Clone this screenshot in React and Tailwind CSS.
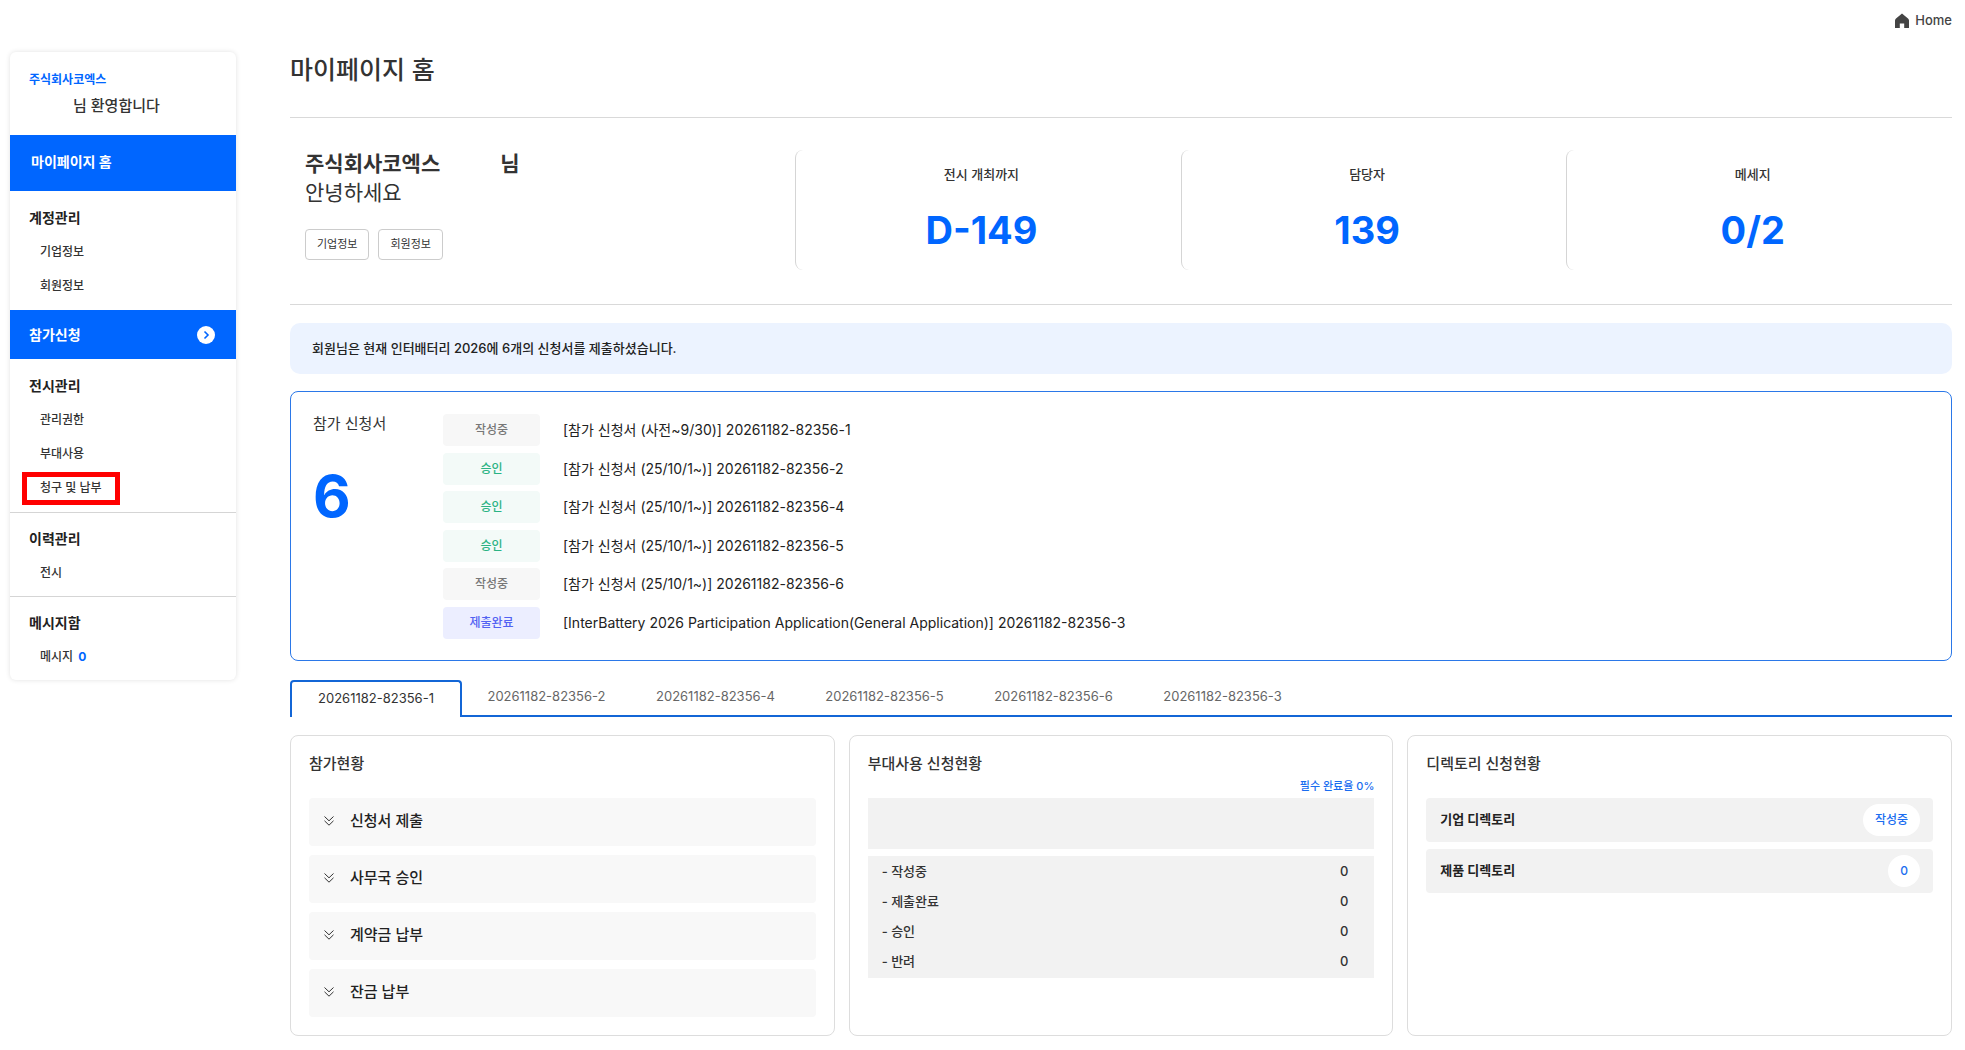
import React, { useState } from 'react';

const menu = [
  { title: '계정관리', items: ['기업정보', '회원정보'] },
  { title: '전시관리', items: ['관리권한', '부대사용', '청구 및 납부'] },
  { title: '이력관리', items: ['전시'] },
  { title: '메시지함', items: ['메시지'] },
];

const stats = [
  { label: '전시 개최까지', value: 'D-149' },
  { label: '담당자', value: '139' },
  { label: '메세지', value: '0/2' },
];

const applications = [
  { status: '작성중', name: '[참가 신청서 (사전~9/30)] 20261182-82356-1' },
  { status: '승인', name: '[참가 신청서 (25/10/1~)] 20261182-82356-2' },
  { status: '승인', name: '[참가 신청서 (25/10/1~)] 20261182-82356-4' },
  { status: '승인', name: '[참가 신청서 (25/10/1~)] 20261182-82356-5' },
  { status: '작성중', name: '[참가 신청서 (25/10/1~)] 20261182-82356-6' },
  { status: '제출완료', name: '[InterBattery 2026 Participation Application(General Application)] 20261182-82356-3' },
];

const statusStyle = {
  작성중: 'bg-[#f7f7f7] text-[#777777]',
  승인: 'bg-[#f3faf8] text-[#2bb384]',
  제출완료: 'bg-[#eceeff] text-[#5262f2]',
};

const tabs = [
  '20261182-82356-1',
  '20261182-82356-2',
  '20261182-82356-4',
  '20261182-82356-5',
  '20261182-82356-6',
  '20261182-82356-3',
];

const steps = ['신청서 제출', '사무국 승인', '계약금 납부', '잔금 납부'];

const usage = [
  { label: '작성중', count: 0 },
  { label: '제출완료', count: 0 },
  { label: '승인', count: 0 },
  { label: '반려', count: 0 },
];

const directories = [
  { label: '기업 디렉토리', value: '작성중' },
  { label: '제품 디렉토리', value: '0' },
];

const HomeIcon = () => (
  <svg width="14" height="16" viewBox="0 0 14 16" fill="#444444" aria-hidden="true">
    <path d="M7 0.5 L13 5.4 Q14 6.2 14 7.4 V15 H9.2 V10.4 H4.8 V15 H0 V7.4 Q0 6.2 1 5.4 Z" />
  </svg>
);

const CircleArrow = () => (
  <svg width="18" height="18" viewBox="0 0 18 18" fill="none" aria-hidden="true">
    <circle cx="9" cy="9" r="9" fill="#ffffff" />
    <path d="M7.5 5.5 L11 9 L7.5 12.5" stroke="#0066ff" strokeWidth="1.6" />
  </svg>
);

const DoubleChevron = () => (
  <svg width="10" height="10" viewBox="0 0 10 10" fill="none" stroke="#333333" aria-hidden="true">
    <path d="M0.5 0.5 L5 4.8 L9.5 0.5 M0.5 4.8 L5 9.2 L9.5 4.8" />
  </svg>
);

const MenuGroup = ({ title, items, divider }) => (
  <div className={divider ? 'border-t border-[#d5d5d5] pt-[15px] pb-[6px]' : 'pt-4 pb-[7px]'}>
    <h3 className="mb-[6px] pl-[19px] text-sm leading-[22px] font-bold text-[#222222]">{title}</h3>
    <ul>
      {items.map((item) => (
        <li key={item} className="flex h-[34px] items-center">
          <a
            href="#"
            className={
              item === '청구 및 납부'
                ? 'ml-3 flex h-[33px] items-center border-5 border-[#ff0000] px-[13px]'
                : 'ml-[30px] flex items-center'
            }
          >
            {item}
            {item === '메시지' && <span className="ml-[5px] font-bold text-[#0066ff]">0</span>}
          </a>
        </li>
      ))}
    </ul>
  </div>
);

const Card = ({ title, note, children }) => (
  <section className="rounded-lg border border-[#dddddd] px-[18px] pt-4 pb-[18px]">
    <div className="flex h-[46px] justify-between">
      <h3 className="text-[15px] leading-6 font-medium">{title}</h3>
      {note && <span className="self-end pb-1 text-[11px] leading-4 font-medium text-[#1a6df0]">{note}</span>}
    </div>
    {children}
  </section>
);

const App = () => {
  const [activeTab, setActiveTab] = useState(tabs[0]);

  return (
    <div className="min-h-screen bg-white pr-[13px] pl-[10px] font-['Inter','Noto_Sans_CJK_KR',sans-serif] text-[#333333]">
      <header className="flex h-[42px] items-center justify-end">
        <a href="#" className="flex items-center gap-[6px] text-[13px] font-medium text-[#444444]">
          <HomeIcon />
          Home
        </a>
      </header>

      <div className="flex items-start">
        <aside className="mt-[10px] w-[226px] shrink-0 overflow-hidden rounded-md text-xs font-medium shadow-[0_0_5px_rgba(0,0,0,0.12)]">
          <div className="h-[83px] pt-[18px] pl-[19px]">
            <p className="leading-5 font-bold text-[#0066ff]">주식회사코엑스</p>
            <p className="mt-1 pl-11 text-[15px] leading-6">님 환영합니다</p>
          </div>
          <a href="#" className="flex h-14 items-center bg-[#0066ff] pb-[2px] pl-[21px] text-sm font-bold text-white">
            마이페이지 홈
          </a>
          <MenuGroup {...menu[0]} />
          <a
            href="#"
            className="flex h-[49px] items-center justify-between bg-[#0066ff] pr-[21px] pl-[19px] text-sm font-bold text-white"
          >
            참가신청
            <CircleArrow />
          </a>
          <MenuGroup {...menu[1]} />
          <MenuGroup {...menu[2]} divider />
          <MenuGroup {...menu[3]} divider />
        </aside>

        <main className="ml-[54px] min-w-0 flex-1">
          <div className="h-[76px] border-b border-[#d9d9d9] pt-[10px]">
            <h1 className="text-[25px] leading-9 font-medium">마이페이지 홈</h1>
          </div>

          <section className="grid grid-cols-[1.31fr_1fr_1fr_1fr] border-b border-[#d9d9d9] pt-8 pb-[34px]">
            <div className="pl-[15px]">
              <p className="flex gap-[60px] text-[21px] leading-7 font-bold">
                <span>주식회사코엑스</span>
                <span>님</span>
              </p>
              <p className="text-[21px] leading-[30px]">안녕하세요</p>
              <div className="mt-[21px] flex gap-[9px]">
                <button type="button" className="h-[31px] rounded border border-[#cccccc] px-[11px] text-[11px]">
                  기업정보
                </button>
                <button type="button" className="h-[31px] rounded border border-[#cccccc] px-[11px] text-[11px]">
                  회원정보
                </button>
              </div>
            </div>
            {stats.map((stat) => (
              <div key={stat.label} className="mr-[14px] h-[120px] rounded-lg border-l border-[#d5d5d5] pt-3 text-center">
                <p className="text-[13px] leading-6 font-medium">{stat.label}</p>
                <p className="mt-5 text-[38px] leading-[48px] font-bold text-[#0066ff]">{stat.value}</p>
              </div>
            ))}
          </section>

          <p className="mt-[18px] rounded-[10px] bg-[#ecf3ff] px-[22px] text-[13px] leading-[51px] font-medium text-[#222222]">
            회원님은 현재 인터배터리 2026에 6개의 신청서를 제출하셨습니다.
          </p>

          <section className="mt-[17px] flex rounded-lg border border-[#2b78e8] px-[22px] pt-[22px] pb-[21px]">
            <div className="w-[130px]">
              <h2 className="mt-[-2px] text-[15px] leading-6">참가 신청서</h2>
              <p className="mt-7 text-[58px] leading-[64px] font-bold text-[#0066ff]">6</p>
            </div>
            <ul className="flex h-[225px] flex-1 flex-col justify-between">
              {applications.map((app) => (
                <li key={app.name} className="flex items-center text-sm text-[#222222]">
                  <span
                    className={`mr-[23px] w-[97px] rounded text-center text-xs leading-8 font-medium ${statusStyle[app.status]}`}
                  >
                    {app.status}
                  </span>
                  <a href="#">{app.name}</a>
                </li>
              ))}
            </ul>
          </section>

          <div role="tablist" className="mt-[19px] flex border-b-2 border-[#1366d6]">
            {tabs.map((tab) => (
              <button
                key={tab}
                type="button"
                role="tab"
                aria-selected={tab === activeTab}
                onClick={() => setActiveTab(tab)}
                className={
                  tab === activeTab
                    ? '-mb-[2px] h-[37px] w-[172px] rounded-t border-2 border-b-0 border-[#1366d6] bg-white pb-[2px] text-[13px] text-[#333333]'
                    : 'h-[33px] w-[169px] text-[13px] text-[#666666]'
                }
              >
                {tab}
              </button>
            ))}
          </div>

          <div className="mt-[18px] grid grid-cols-3 gap-[14px] pb-3">
            <Card title="참가현황">
              <ul className="space-y-[9px]">
                {steps.map((step) => (
                  <li
                    key={step}
                    className="flex h-12 items-center gap-4 rounded bg-[#f8f8f8] px-[15px] pb-[2px] text-[15px] font-medium text-[#222222]"
                  >
                    <DoubleChevron />
                    {step}
                  </li>
                ))}
              </ul>
            </Card>

            <Card title="부대사용 신청현황" note="필수 완료율 0%">
              <div className="h-[51px] bg-[#f2f2f2]" />
              <dl className="mt-[7px] bg-[#f2f2f2] py-px pr-[26px] pl-[14px] text-[13px]">
                {usage.map((row) => (
                  <div key={row.label} className="flex h-[30px] items-center justify-between font-medium">
                    <dt>- {row.label}</dt>
                    <dd>{row.count}</dd>
                  </div>
                ))}
              </dl>
            </Card>

            <Card title="디렉토리 신청현황">
              <ul className="space-y-[7px]">
                {directories.map((dir) => (
                  <li
                    key={dir.label}
                    className="flex h-11 items-center justify-between rounded bg-[#f2f2f2] pr-[13px] pl-[14px] text-[13px] font-bold text-[#222222]"
                  >
                    {dir.label}
                    <a href="#" className="rounded-full bg-white px-3 text-xs leading-8 font-medium text-[#1a6df0]">
                      {dir.value}
                    </a>
                  </li>
                ))}
              </ul>
            </Card>
          </div>
        </main>
      </div>
    </div>
  );
};

export default App;
